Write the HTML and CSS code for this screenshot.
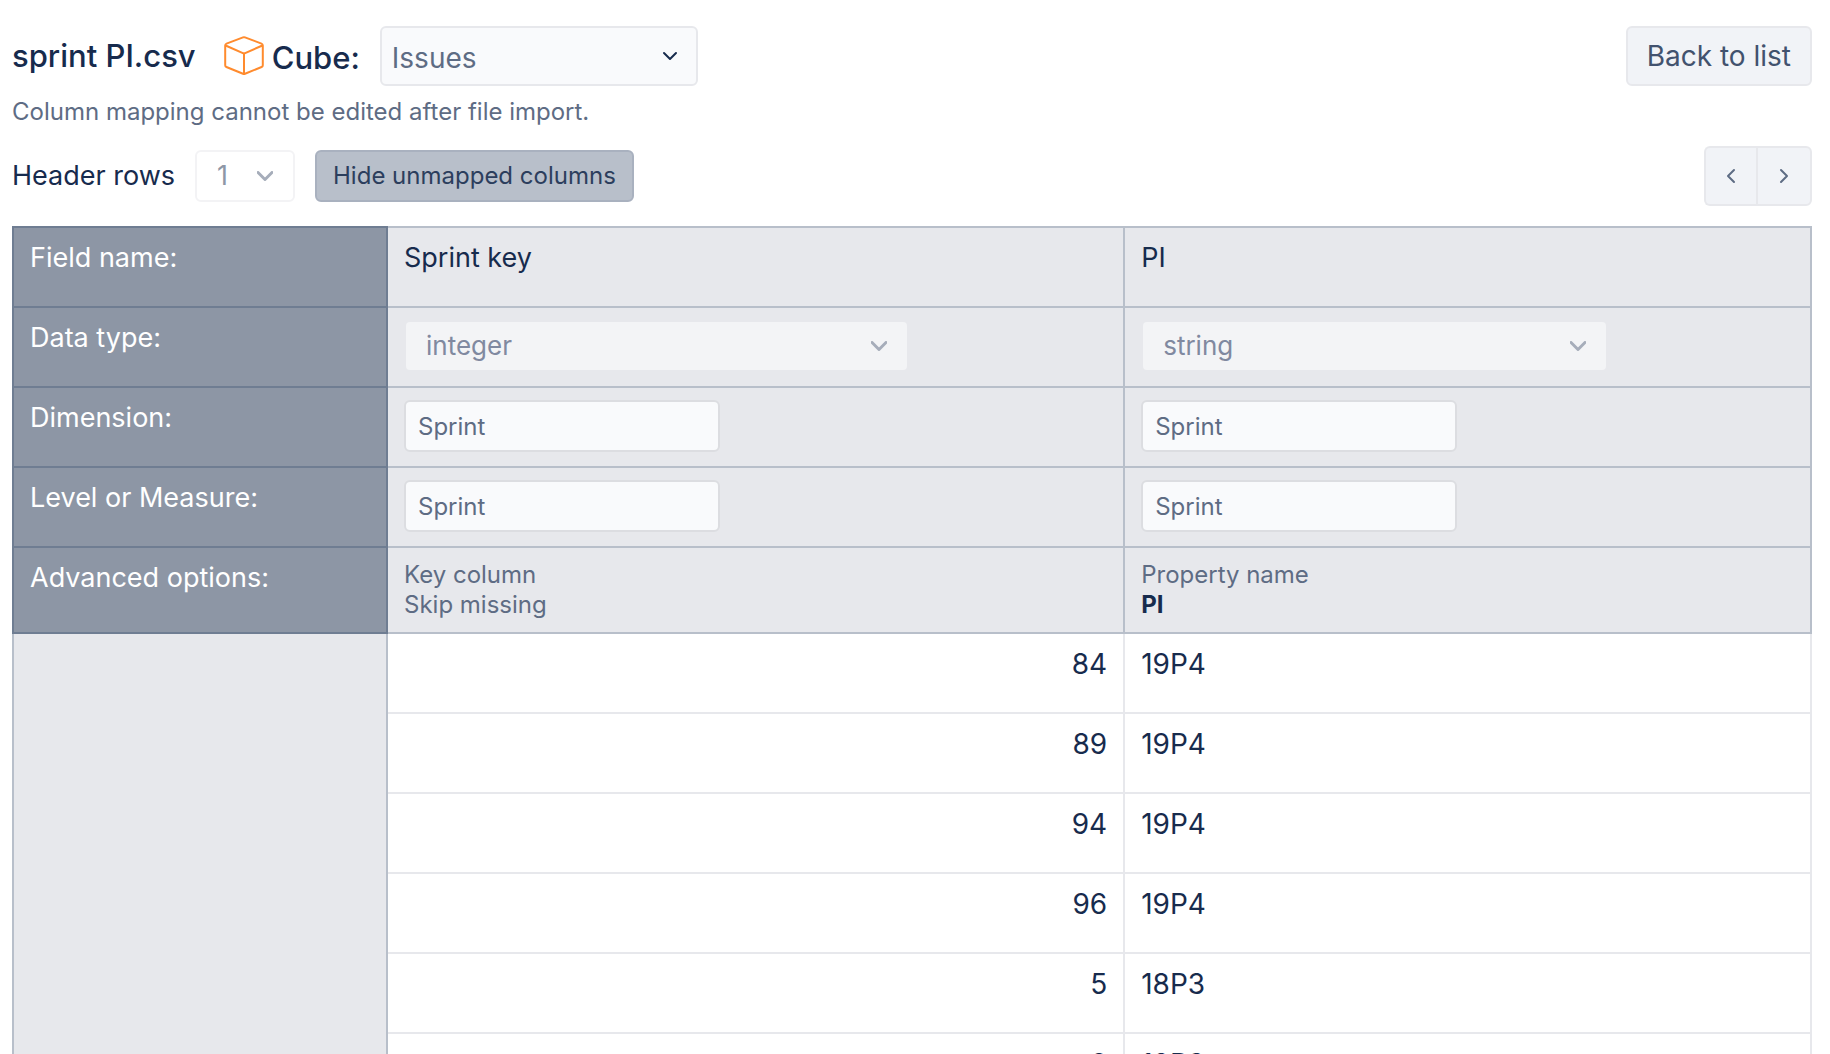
FILE: index.html
```html
<!DOCTYPE html>
<html lang="en">
<head>
<meta charset="utf-8">
<title>sprint PI.csv</title>
<link rel="stylesheet" href="styles.css">
</head>
<body>
<main class="page">
  <header class="topbar">
    <h1 class="file-name">sprint PI.csv</h1>
    <div class="cube">
      <svg class="cube-icon" viewBox="0 0 40 40" aria-hidden="true"><path d="M19 1.400Q20 1 21 1.400L37.500 7.600Q38.800 8.200 38.800 9.500V29.200Q38.800 30.500 37.600 31L21 37.800Q20 38.200 19 37.800L2.400 31Q1.200 30.500 1.200 29.200V9.500Q1.200 8.200 2.500 7.600ZM1.600 9.500 20 17.600 38.400 9.500M20 17.600V38"/></svg>
      <label class="cube-label" for="cube">Cube:</label>
    </div>
    <div class="select select-cube">
      <select id="cube"><option>Issues</option></select>
      <svg class="chevron" viewBox="0 0 16 10" aria-hidden="true"><path d="M2 2 8 8 14 2"/></svg>
    </div>
    <button class="button button-back" type="button">Back to list</button>
  </header>
  <p class="hint">Column mapping cannot be edited after file import.</p>
  <div class="toolbar">
    <label for="header-rows">Header rows</label>
    <div class="select select-rows">
      <select id="header-rows" disabled><option>1</option></select>
      <svg class="chevron" viewBox="0 0 16 10" aria-hidden="true"><path d="M1 1.500 8 8.500 15 1.500"/></svg>
    </div>
    <button class="button button-toggle" type="button">Hide unmapped columns</button>
    <div class="pager">
      <button class="button" type="button" aria-label="Previous columns"><svg viewBox="0 0 10 16" aria-hidden="true"><path d="M8 2 2 8 8 14"/></svg></button>
      <button class="button" type="button" aria-label="Next columns"><svg viewBox="0 0 10 16" aria-hidden="true"><path d="M2 2 8 8 2 14"/></svg></button>
    </div>
  </div>
  <table class="mapping">
    <colgroup><col class="col-label"><col class="col-key"><col></colgroup>
    <thead>
      <tr><th scope="row">Field name:</th><td>Sprint key</td><td>PI</td></tr>
      <tr>
        <th scope="row">Data type:</th>
        <td><div class="select select-type"><select aria-label="Data type of Sprint key" disabled><option>integer</option></select><svg class="chevron" viewBox="0 0 16 10" aria-hidden="true"><path d="M1 1.500 8 8.500 15 1.500"/></svg></div></td>
        <td><div class="select select-type"><select aria-label="Data type of PI" disabled><option>string</option></select><svg class="chevron" viewBox="0 0 16 10" aria-hidden="true"><path d="M1 1.500 8 8.500 15 1.500"/></svg></div></td>
      </tr>
      <tr>
        <th scope="row">Dimension:</th>
        <td><input class="field" type="text" value="Sprint" aria-label="Dimension of Sprint key" readonly></td>
        <td><input class="field" type="text" value="Sprint" aria-label="Dimension of PI" readonly></td>
      </tr>
      <tr>
        <th scope="row">Level or Measure:</th>
        <td><input class="field" type="text" value="Sprint" aria-label="Level or measure of Sprint key" readonly></td>
        <td><input class="field" type="text" value="Sprint" aria-label="Level or measure of PI" readonly></td>
      </tr>
      <tr>
        <th scope="row">Advanced options:</th>
        <td class="options"><div>Key column</div><div>Skip missing</div></td>
        <td class="options"><div>Property name</div><strong>PI</strong></td>
      </tr>
    </thead>
    <tbody>
      <tr><td class="spacer" rowspan="6"></td><td class="number">84</td><td>19P4</td></tr>
      <tr><td class="number">89</td><td>19P4</td></tr>
      <tr><td class="number">94</td><td>19P4</td></tr>
      <tr><td class="number">96</td><td>19P4</td></tr>
      <tr><td class="number">5</td><td>18P3</td></tr>
      <tr><td class="number">6</td><td>18P3</td></tr>
    </tbody>
  </table>
</main>
</body>
</html>
```
FILE: styles.css
```css
* { box-sizing: border-box; }

body {
  margin: 0;
  background: #fff;
  color: #172b4d;
  font: 28px/36px Inter, "Liberation Sans", sans-serif;
}

.page {
  height: 100vh;
  padding: 26px 18px 0 12px;
  overflow: hidden;
}

button, select, input { font: inherit; color: inherit; margin: 0; }

svg { fill: none; stroke: currentColor; stroke-width: 2; stroke-linecap: round; stroke-linejoin: round; }

.topbar { display: flex; align-items: center; height: 60px; }
.file-name { margin: 0 28px 0 0; font-size: 31px; font-weight: 500; }
.cube { display: flex; align-items: center; gap: 8px; margin-right: 20px; }
.cube-icon { width: 40px; height: 40px; color: #ff8b2e; }
.cube-label { padding-top: 4px; font-size: 31px; font-weight: 500; }

.select { display: grid; align-items: center; }
.select select, .select .chevron { grid-area: 1 / 1; }
.select select {
  width: 100%;
  height: 100%;
  border: 2px solid #e7e8ec;
  border-radius: 6px;
  background: #f9fafc;
  color: #5e6c84;
  appearance: none;
  opacity: 1;
}
.chevron { justify-self: end; width: 16px; height: 10px; pointer-events: none; }

.select-cube { width: 318px; height: 60px; }
.select-cube select { padding: 4px 10px 0; }
.select-cube .chevron { margin-right: 20px; }

.button {
  border: 2px solid #e7e8ec;
  border-radius: 6px;
  background: #f1f3f7;
  color: #42526e;
}
.button-back { height: 60px; margin-left: auto; padding: 0 19px; }

.hint { margin: 10px 0 16px; color: #5e6c84; font-size: 24px; line-height: 32px; }

.toolbar { display: flex; align-items: center; height: 64px; margin-bottom: 18px; font-size: 27px; }
.select-rows { width: 100px; height: 52px; margin: 0 20px; }
.select-rows select { padding: 0 20px; border-color: #f3f3f5; background: #fff; color: #8e97a6; }
.select-rows .chevron, .select-type .chevron { margin-right: 22px; color: #a6adba; stroke-width: 3; }
.button-toggle { height: 52px; padding: 0 16px; border-color: #a9b1bf; background: #b8bfca; color: #2c3e5d; font-size: 24px; }

.pager { display: flex; margin-left: auto; }
.pager .button { display: grid; place-items: center; width: 56px; height: 60px; padding: 0; }
.pager .button:first-child { width: 52px; border-right: 0; border-radius: 6px 0 0 6px; }
.pager .button:last-child { border-radius: 0 6px 6px 0; }
.pager svg { width: 10px; height: 16px; color: #5e6c84; }

.mapping { width: 100%; table-layout: fixed; border-collapse: collapse; }
.col-label { width: 374px; }
.col-key { width: 41%; }
.mapping th, .mapping td {
  height: 80px;
  padding: 12px 16px;
  border: 2px solid #e7e8ec;
  font-weight: 400;
  text-align: left;
  vertical-align: top;
}
.mapping thead td { border-color: #b8bfca; background: #e7e8ec; font-size: 27px; }
.mapping thead th { border-color: #6f7d92; background: #8d96a5; color: #fff; font-size: 27px; }
.mapping .spacer { border-color: #b8bfca; background: #e7e8ec; }
.mapping .number { text-align: right; }
.mapping thead .options { height: 86px; color: #5e6c84; font-size: 24px; line-height: 30px; }
.options strong { color: #172b4d; font-weight: 700; }

.select-type { width: calc(77% - 36px); height: 52px; }
.select-type select { padding: 0 20px; border-color: #e7e8ec; background: #f3f4f6; color: #8089a0; font-size: 26px; }

.field {
  display: block;
  width: 316px;
  height: 52px;
  padding: 0 12px;
  border: 2px solid #dcdde1;
  border-radius: 6px;
  background: #f9fafc;
  color: #5e6c84;
  font-size: 24px;
}
```
